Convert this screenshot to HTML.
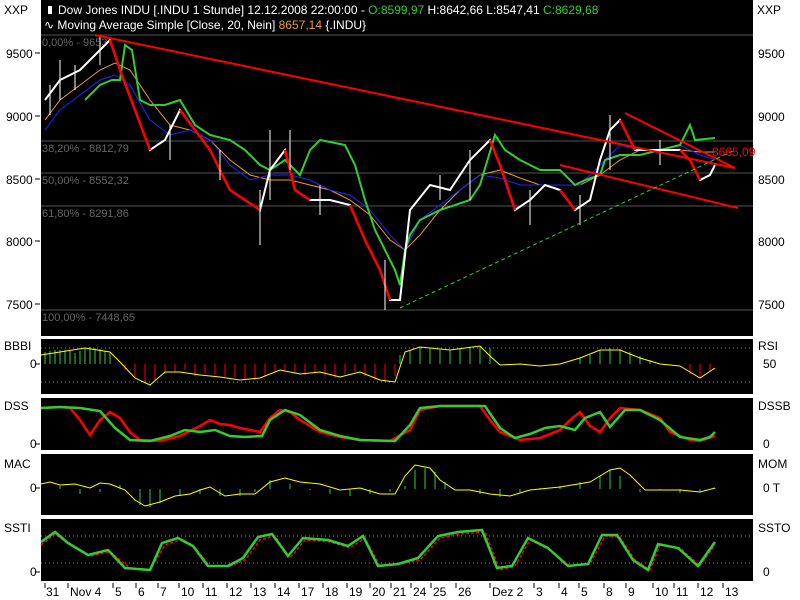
<!DOCTYPE html>
<html><head><meta charset="utf-8"><style>
body{margin:0;background:#fff;width:800px;height:600px;overflow:hidden;font-family:"Liberation Sans",sans-serif}
svg{position:absolute;left:0;top:0}
</style></head><body>
<svg width="800" height="600" font-family="Liberation Sans, sans-serif" font-size="12">
<rect width="800" height="600" fill="#fff"/>
<rect x="41" y="0" width="712" height="336" fill="#000"/>
<rect x="41" y="339" width="712" height="55" fill="#000"/>
<rect x="41" y="398" width="712" height="52" fill="#000"/>
<rect x="41" y="454" width="712" height="61" fill="#000"/>
<rect x="41" y="519" width="712" height="62" fill="#000"/>
<text x="4" y="14" fill="#000">XXP</text><text x="757" y="14" fill="#000">XXP</text>
<rect x="48" y="6" width="4" height="8" fill="#fff"/>
<text x="58" y="14" fill="#fff">Dow Jones INDU [.INDU  1 Stunde] 12.12.2008 22:00:00 - <tspan fill="#3c3">O:8599,97</tspan> H:8642,66 L:8547,41 <tspan fill="#3c3">C:8629,68</tspan></text>
<text x="44" y="29" fill="#fff">∿ Moving Average Simple [Close, 20, Nein] <tspan fill="#e8a030">8657,14</tspan> {.INDU}</text>
<g stroke="#555" stroke-width="1">
<line x1="41" y1="35" x2="753" y2="35"/><line x1="41" y1="141" x2="753" y2="141"/>
<line x1="41" y1="173" x2="753" y2="173"/><line x1="41" y1="206" x2="753" y2="206"/>
<line x1="41" y1="310" x2="753" y2="310"/></g>
<g fill="#666" font-size="11">
<text x="42" y="46">0,00% - 9653</text><text x="42" y="152">38,20% - 8812,79</text>
<text x="42" y="184">50,00% - 8552,32</text><text x="42" y="217">61,80% - 8291,86</text>
<text x="42" y="321">100,00% - 7448,65</text></g>
<g fill="#000"><text x="6" y="58">9500</text><text x="6" y="121">9000</text><text x="6" y="184">8500</text><text x="6" y="246">8000</text><text x="6" y="309">7500</text>
<text x="758" y="58">9500</text><text x="758" y="121">9000</text><text x="758" y="184">8500</text><text x="758" y="246">8000</text><text x="758" y="309">7500</text></g>
<g stroke="#000"><path d="M35 53h5M35 116h5M35 179h5M35 241h5M35 304h5M35 364h5M35 444h5M35 488h5M35 572h5"/></g>
<polyline fill="none" stroke="#e8a030" stroke-width="1" points="45,120 60,100 80,85 100,70 115,63 130,70 150,100 170,125 190,130 210,140 230,160 250,175 270,180 290,180 310,185 330,190 350,200 370,215 390,240 405,250 420,235 440,210 460,190 480,175 500,170 520,178 540,185 560,185 580,185 600,175 620,160 640,150 660,150 680,150 700,152 715,152"/>
<polyline fill="none" stroke="#22f" stroke-width="1" points="45,130 60,110 80,95 100,80 115,75 130,85 150,120 170,135 190,130 210,140 230,165 250,180 270,175 290,175 310,180 330,190 350,195 370,210 390,235 405,250 420,220 440,205 460,190 480,175 500,178 520,185 540,185 560,185 580,185 600,165 620,145 640,150 660,150 680,145 700,155 715,160"/>
<polyline fill="none" stroke="#3c3" stroke-width="2" points="85,100 100,85 112,80 120,80 125,45 132,50 140,100 150,105 165,105 180,100 195,125 210,135 230,140 245,150 260,165 270,170 285,160 300,175 310,150 320,140 345,145 355,165 365,200 375,230 385,250 395,270 400,285 405,250 410,235 420,220 440,210 470,200 480,185 495,135 505,150 520,160 540,170 560,170 575,185 585,180 600,175 605,160 620,155 640,155 660,150 680,145 690,125 695,140 715,138"/>
<polyline fill="none" stroke="#fff" stroke-width="2" points="45,100 60,80 80,70 100,50 110,40 120,70 135,110 150,150 165,140 180,110 195,130 210,150 230,190 245,200 260,210 270,170 285,150 295,190 310,200 330,200 350,205 365,240 380,270 390,300 400,300 410,210 430,185 450,190 470,160 490,140 500,165 515,210 530,200 545,185 560,190 575,210 590,200 600,160 610,130 620,120 635,150 650,150 665,150 680,150 690,160 700,180 710,175 715,165"/>
<g fill="none" stroke="#f00" stroke-width="2.5">
<polyline points="110,40 120,70 135,110 150,150"/><polyline points="180,110 195,130 210,150 230,190 245,200 260,210"/>
<polyline points="285,150 295,190 310,200"/><polyline points="350,205 365,240 380,270 390,300"/>
<polyline points="490,140 500,165 515,210"/><polyline points="560,190 575,210"/><polyline points="620,120 635,150"/><polyline points="680,150 690,160 700,180"/></g>
<g stroke="#fff" stroke-width="1">
<line x1="50" y1="85" x2="50" y2="115"/><line x1="60" y1="60" x2="60" y2="100"/><line x1="75" y1="65" x2="75" y2="90"/><line x1="100" y1="35" x2="100" y2="65"/><line x1="170" y1="125" x2="170" y2="160"/><line x1="220" y1="150" x2="220" y2="180"/><line x1="270" y1="130" x2="270" y2="200"/><line x1="290" y1="130" x2="290" y2="170"/><line x1="260" y1="190" x2="260" y2="245"/><line x1="320" y1="185" x2="320" y2="215"/><line x1="385" y1="260" x2="385" y2="310"/><line x1="440" y1="175" x2="440" y2="200"/><line x1="470" y1="150" x2="470" y2="200"/><line x1="530" y1="190" x2="530" y2="225"/><line x1="580" y1="195" x2="580" y2="225"/><line x1="610" y1="115" x2="610" y2="170"/><line x1="660" y1="140" x2="660" y2="165"/></g>
<line x1="95" y1="35" x2="735" y2="168" stroke="#f00" stroke-width="2"/>
<line x1="625" y1="113" x2="735" y2="168" stroke="#f00" stroke-width="2"/>
<line x1="560" y1="165" x2="738" y2="208" stroke="#f00" stroke-width="2"/>
<line x1="400" y1="308" x2="735" y2="150" stroke="#3c3" stroke-width="1" stroke-dasharray="4,3"/>
<text x="712" y="156" fill="#f00">8665,09</text>
<g fill="#000"><text x="4" y="350">BBBI</text><text x="30" y="368">0</text><text x="758" y="350">RSI</text><text x="763" y="368">50</text>
<text x="4" y="410">DSS</text><text x="30" y="448">0</text><text x="758" y="410">DSSB</text><text x="763" y="448">0</text>
<text x="4" y="468">MAC</text><text x="30" y="492">0</text><text x="758" y="468">MOM</text><text x="763" y="492">0 T</text>
<text x="4" y="532">SSTI</text><text x="30" y="576">0</text><text x="758" y="532">SSTO</text><text x="763" y="576">0</text></g>
<g stroke="#888" stroke-dasharray="1,3"><line x1="41" y1="348" x2="753" y2="348"/><line x1="41" y1="382" x2="753" y2="382"/>
<line x1="41" y1="536" x2="753" y2="536"/><line x1="41" y1="563" x2="753" y2="563"/></g>
<g stroke="#3c3" stroke-width="1"><path d="M45 364V352M50 364V351M55 364V350M60 364V350M65 364V350M70 364V351M75 364V353M80 364V351M85 364V348M90 364V347M95 364V348M100 364V349M105 364V351M110 364V352M400 364V355M410 364V350M420 364V347M430 364V348M440 364V350M450 364V350M460 364V349M470 364V348M480 364V347M490 364V348M580 364V358M590 364V355M600 364V350M610 364V348M620 364V349M630 364V352M640 364V356M650 364V360"/></g>
<g stroke="#f00" stroke-width="1"><path d="M125 364V370M135 364V378M145 364V383M155 364V381M165 364V374M175 364V372M185 364V370M195 364V376M205 364V373M215 364V375M225 364V377M235 364V378M245 364V380M255 364V380M265 364V376M275 364V372M285 364V370M295 364V373M305 364V375M315 364V372M325 364V376M335 364V378M345 364V374M355 364V372M365 364V376M375 364V380M385 364V382M395 364V376M690 364V374M700 364V378M710 364V372"/></g>
<polyline fill="none" stroke="#ff0" points="41,355 60,352 85,348 110,352 120,362 135,378 150,385 165,372 180,372 200,375 220,377 240,380 260,378 280,370 300,374 320,372 340,377 360,372 380,380 395,382 405,352 420,347 450,350 480,346 490,356 500,365 520,364 540,366 560,364 580,358 600,350 620,350 640,358 660,364 680,366 690,372 700,378 715,368"/>
<polyline fill="none" stroke="#f00" stroke-width="2.5" points="41,408 60,407 70,408 80,420 90,435 100,420 110,412 120,418 130,432 140,440 160,441 180,436 200,426 210,420 220,424 230,425 240,428 260,432 270,418 280,410 290,412 300,420 320,432 340,437 360,440 390,441 410,430 420,410 440,406 480,406 490,420 500,432 520,440 540,438 560,430 570,420 580,412 590,426 600,432 610,418 620,408 640,410 660,418 670,432 690,440 700,441 715,436"/>
<polyline fill="none" stroke="#3c3" stroke-width="2.5" points="41,408 60,407 80,408 100,411 115,428 130,440 150,441 170,436 185,430 200,432 215,430 230,436 245,437 262,436 270,420 285,410 300,415 320,430 340,436 360,440 395,441 410,425 420,408 440,406 485,406 500,428 515,438 530,434 545,428 560,426 575,430 585,418 600,412 610,427 625,410 640,410 660,420 680,437 700,440 710,437 715,432"/>
<g stroke="#3c3"><path d="M60 489V486M80 489V494M100 489V492M120 489V485M140 489V505M150 489V507M160 489V503M180 489V496M200 489V494M220 489V496M240 489V496M255 489V492M270 489V480M290 489V484M310 489V490M330 489V494M350 489V496M370 489V494M390 489V492M405 489V486M415 489V470M425 489V468M435 489V472M445 489V482M460 489V489M480 489V494M500 489V497M520 489V493M540 489V488M560 489V486M580 489V482M600 489V476M610 489V470M620 489V476M640 489V492M660 489V490M680 489V493M700 489V492M715 489V488"/></g>
<polyline fill="none" stroke="#ff0" points="41,484 50,482 60,485 75,484 90,488 100,483 110,484 125,490 135,500 145,506 160,502 175,496 190,494 200,490 210,487 225,496 240,494 255,494 270,482 285,478 300,482 320,484 340,490 360,488 380,494 395,494 405,476 415,465 430,468 440,480 455,490 470,490 490,494 510,496 530,490 560,487 590,482 600,476 610,470 620,468 630,475 645,490 660,490 680,490 700,492 715,488"/>
<polyline fill="none" stroke="#f00" stroke-dasharray="3,2" stroke-width="1.5" points="41,545 55,534 70,545 90,556 110,552 130,568 150,570 165,545 180,540 195,548 210,566 230,566 245,560 260,540 275,536 290,558 305,540 330,542 350,548 365,538 380,566 400,564 420,560 440,538 460,534 485,532 500,570 515,566 530,540 550,550 570,566 590,564 605,536 620,537 635,560 650,570 660,545 680,548 700,566 715,545"/>
<polyline fill="none" stroke="#3c3" stroke-width="2.5" points="41,542 55,532 68,543 88,555 108,550 125,568 150,570 162,543 178,538 193,546 208,566 228,566 243,558 258,537 272,534 288,556 303,538 328,540 348,546 363,536 378,566 398,564 418,558 438,536 458,532 482,530 497,568 512,566 528,538 548,548 568,566 588,564 602,535 617,535 633,560 648,570 658,544 678,548 698,566 715,542"/>
<g fill="#000" font-size="12"><text x="46" y="596">31</text><text x="70" y="596">Nov 4</text><text x="115" y="596">5</text><text x="138" y="596">6</text><text x="160" y="596">7</text><text x="181" y="596">10</text><text x="205" y="596">11</text><text x="229" y="596">12</text><text x="253" y="596">13</text><text x="277" y="596">14</text><text x="301" y="596">17</text><text x="325" y="596">18</text><text x="349" y="596">19</text><text x="372" y="596">20</text><text x="393" y="596">21</text><text x="413" y="596">24</text><text x="433" y="596">25</text><text x="458" y="596">26</text><text x="492" y="596">Dez 2</text><text x="536" y="596">3</text><text x="561" y="596">4</text><text x="581" y="596">5</text><text x="606" y="596">8</text><text x="628" y="596">9</text><text x="655" y="596">10</text><text x="676" y="596">11</text><text x="700" y="596">12</text><text x="725" y="596">13</text></g>
<g stroke="#000"><path d="M45 583v5M68 583v5M113 583v5M136 583v5M158 583v5M179 583v5M203 583v5M227 583v5M251 583v5M275 583v5M299 583v5M323 583v5M347 583v5M370 583v5M391 583v5M411 583v5M431 583v5M456 583v5M490 583v5M534 583v5M559 583v5M579 583v5M604 583v5M626 583v5M653 583v5M674 583v5M698 583v5M723 583v5"/></g>
</svg>
</body></html>
